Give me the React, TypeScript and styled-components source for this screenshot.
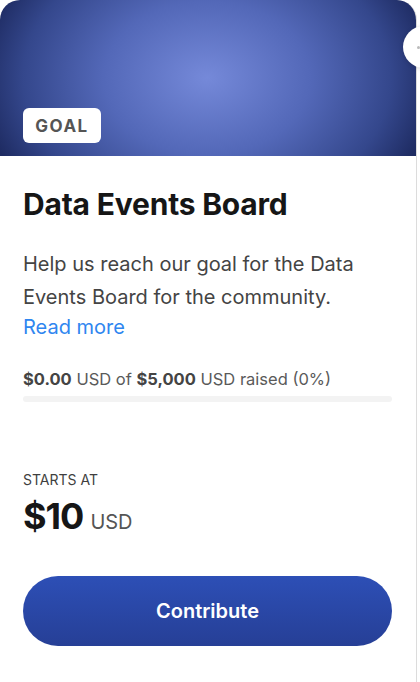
import React from "react";
import styled, { createGlobalStyle } from "styled-components";

const Global = createGlobalStyle`
  html, body { margin: 0; padding: 0; background: #fff; }
  body { font-family: Inter, "Noto Sans", sans-serif; overflow: hidden; }
`;

const Page = styled.div`
  position: relative;
  width: 420px;
  height: 682px;
  overflow: hidden;
`;

const Card = styled.div`
  width: 416px;
  min-height: 720px;
  border-right: 1px solid #dcdcdc;
  border-radius: 20px 20px 0 0;
  overflow: hidden;
  background: #fff;
  display: flex;
  flex-direction: column;
`;

const Header = styled.div`
  height: 156px;
  background: radial-gradient(ellipse 230px 170px at 207px 78px, #7589d9 0%, #5368b8 45%, #34478c 80%, #1e2b62 100%);
  display: flex;
  align-items: flex-end;
  padding: 0 23px 13px;
  box-sizing: border-box;
`;

const Badge = styled.span`
  background: #fff;
  border-radius: 6px;
  height: 35px;
  width: 78px;
  display: flex;
  align-items: center;
  justify-content: center;
  font-weight: 700;
  font-size: 17px;
  letter-spacing: 1.5px;
  color: #555;
`;

const Body = styled.div`
  padding: 30px 24px 0 23px;
  display: flex;
  flex-direction: column;
`;

const Title = styled.h2`
  margin: 0;
  font-size: 30px;
  line-height: 36px;
  font-weight: 700;
  color: #161616;
  letter-spacing: -0.2px;
`;

const Desc = styled.p`
  margin: 26px 0 0;
  font-size: 20px;
  line-height: 33px;
  color: #444;
`;

const ReadMore = styled.a`
  display: block;
  font-size: 20px;
  line-height: 27px;
  color: #2f86f0;
  text-decoration: none;
`;

const Raised = styled.div`
  margin-top: 27px;
  font-size: 16.5px;
  line-height: 22px;
  color: #5a5a5a;
  b { font-weight: 700; color: #444; }
`;

const Track = styled.div`
  margin-top: 6px;
  height: 6px;
  width: 369px;
  border-radius: 3px;
  background: #f3f3f3;
`;

const StartsAt = styled.div`
  margin-top: 69px;
  font-size: 14px;
  line-height: 18px;
  color: #3f3f3f;
`;

const PriceRow = styled.div`
  display: flex;
  align-items: baseline;
  gap: 7px;
  margin-top: 5px;
`;

const Price = styled.span`
  font-size: 36px;
  line-height: 44px;
  font-weight: 700;
  color: #161616;
  letter-spacing: -1px;
`;

const Currency = styled.span`
  font-size: 20px;
  color: #555;
`;

const Button = styled.button`
  margin-top: 38px;
  width: 369px;
  height: 70px;
  border: none;
  border-radius: 35px;
  background: linear-gradient(180deg, #2d4fb6 0%, #263f96 100%);
  color: #fff;
  font-family: Inter, "Noto Sans", sans-serif;
  font-size: 20px;
  font-weight: 600;
  cursor: pointer;
`;

const NextButton = styled.div`
  position: absolute;
  left: 403px;
  top: 26px;
  width: 42px;
  height: 42px;
  border-radius: 50%;
  background: #fff;
  box-shadow: 0 1px 4px rgba(0, 0, 0, 0.15);
  display: flex;
  align-items: center;
  padding-left: 14px;
  box-sizing: border-box;
`;

const Dot = styled.span`
  width: 3px;
  height: 3px;
  border-radius: 50%;
  background: #bbb;
`;

export default function App() {
  return (
    <Page>
      <Global />
      <Card>
        <Header>
          <Badge>GOAL</Badge>
        </Header>
        <Body>
          <Title>Data Events Board</Title>
          <Desc>Help us reach our goal for the Data Events Board for the community.</Desc>
          <ReadMore href="#">Read more</ReadMore>
          <Raised>
            <b>$0.00</b> USD of <b>$5,000</b> USD raised (0%)
          </Raised>
          <Track />
          <StartsAt>STARTS AT</StartsAt>
          <PriceRow>
            <Price>$10</Price>
            <Currency>USD</Currency>
          </PriceRow>
          <Button>Contribute</Button>
        </Body>
      </Card>
      <NextButton>
        <Dot />
      </NextButton>
    </Page>
  );
}
